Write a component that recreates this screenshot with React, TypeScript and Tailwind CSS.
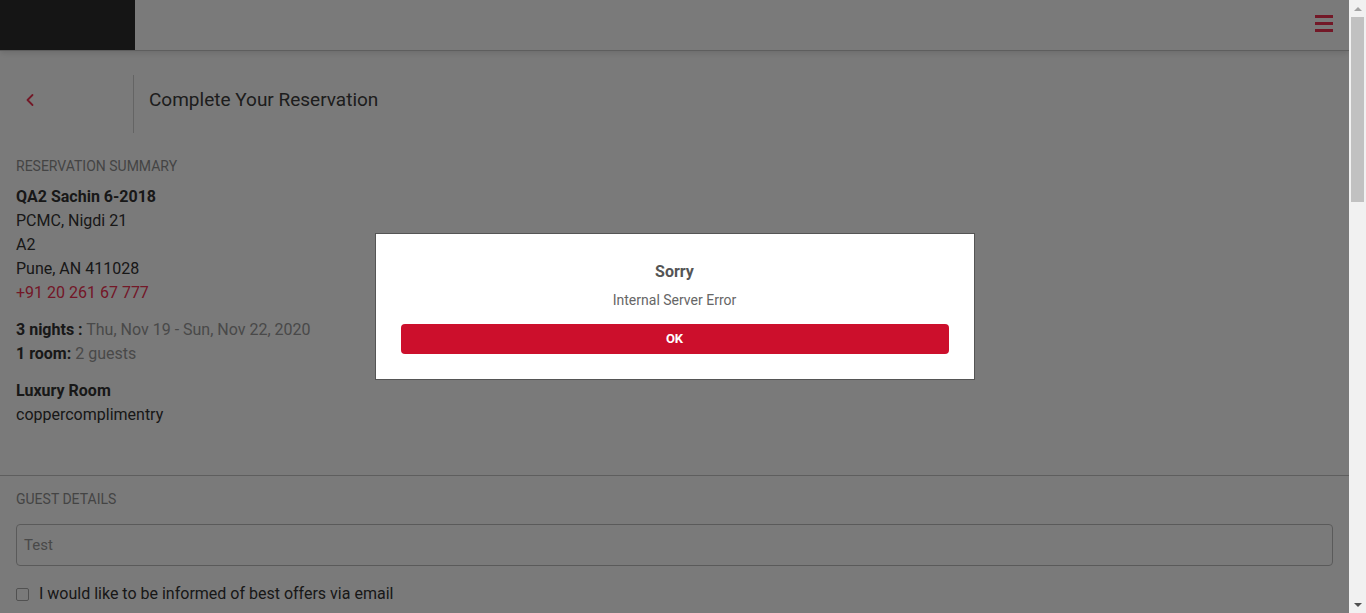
import { ChevronLeft } from "lucide-react";

const font = { fontFamily: "Roboto, 'Liberation Sans', sans-serif" };

const Header = () => (
  <div className="relative h-[51px] bg-white border-b border-[#c4c4c4] shadow-[0_2px_6px_rgba(0,0,0,0.12)]">
    <div className="flex flex-row justify-between items-center h-[50px]">
      <div className="w-[135px] h-full bg-[#2d2d2d]" />
      <div className="flex flex-col gap-[4px] mr-[16px] mt-[-4px]">
        <span className="block w-[18px] h-[3px] bg-[#f03252]" />
        <span className="block w-[18px] h-[3px] bg-[#f03252]" />
        <span className="block w-[18px] h-[3px] bg-[#f03252]" />
      </div>
    </div>
  </div>
);

const SummaryLine = ({ children, className = "" }: { children: React.ReactNode; className?: string }) => (
  <p className={`text-[16px] leading-[24px] text-[#333] ${className}`}>{children}</p>
);

const Field = ({ placeholder }: { placeholder: string }) => (
  <div className="w-full h-[42px] border border-[#bdbdbd] rounded-[4px] flex items-center px-[7px] text-[15px] text-[#999]">
    {placeholder}
  </div>
);

const Scrollbar = () => (
  <div className="w-[17px] h-full bg-[#f1f1f1] flex flex-col items-center shrink-0">
    <div className="h-[17px] w-full flex items-center justify-center">
      <span className="block w-0 h-0 border-l-[4px] border-r-[4px] border-b-[4px] border-l-transparent border-r-transparent border-b-[#a3a3a3]" />
    </div>
    <div className="w-[13px] h-[185px] bg-[#c1c1c1]" />
    <div className="flex-1" />
    <div className="h-[17px] w-full flex items-center justify-center">
      <span className="block w-0 h-0 border-l-[4px] border-r-[4px] border-t-[4px] border-l-transparent border-r-transparent border-t-[#505050]" />
    </div>
  </div>
);

export default function App() {
  return (
    <div className="flex flex-row h-screen overflow-hidden bg-white" style={font}>
      <div className="relative flex-1 h-full overflow-hidden">
        <Header />
        <div className="flex flex-row items-center mt-[24px] h-[58px]">
          <div className="w-[134px] h-full border-r border-[#d2d2d2] flex items-center pl-[20px] pb-[9px]">
            <ChevronLeft size={20} strokeWidth={2.2} color="#f03252" />
          </div>
          <h1 className="pl-[15px] pb-[8px] text-[19px] text-[#3d3d3d]">Complete Your Reservation</h1>
        </div>

        <div className="px-[16px] pt-[25px]">
          <p className="text-[14px] leading-[16px] text-[#8f8f8f] uppercase">Reservation Summary</p>
          <div className="mt-[11px]">
            <SummaryLine className="font-bold">QA2 Sachin 6-2018</SummaryLine>
            <SummaryLine>PCMC, Nigdi 21</SummaryLine>
            <SummaryLine>A2</SummaryLine>
            <SummaryLine>Pune, AN 411028</SummaryLine>
            <SummaryLine className="!text-[#f03252]">+91 20 261 67 777</SummaryLine>
          </div>
          <div className="mt-[13px]">
            <SummaryLine>
              <span className="font-bold">3 nights :</span>{" "}
              <span className="text-[#999]">Thu, Nov 19 - Sun, Nov 22, 2020</span>
            </SummaryLine>
            <SummaryLine>
              <span className="font-bold">1 room:</span> <span className="text-[#999]">2 guests</span>
            </SummaryLine>
          </div>
          <div className="mt-[13px]">
            <SummaryLine className="font-bold">Luxury Room</SummaryLine>
            <SummaryLine>coppercomplimentry</SummaryLine>
          </div>
        </div>

        <div className="mt-[48px] border-t border-[#c4c4c4]" />

        <div className="px-[16px] pt-[15px]">
          <p className="text-[14px] leading-[16px] text-[#8f8f8f] uppercase">Guest Details</p>
          <div className="mt-[17px]">
            <Field placeholder="Test" />
          </div>
          <label className="flex flex-row items-center gap-[10px] mt-[16px]">
            <span className="block w-[13px] h-[13px] border border-[#aaa] rounded-[2px] bg-white" />
            <span className="text-[16px] leading-[24px] text-[#333]">I would like to be informed of best offers via email</span>
          </label>
        </div>

        {/* backdrop */}
        <div className="absolute inset-0 bg-black/[0.52] z-40" />

        {/* dialog */}
        <div className="absolute inset-0 z-50 flex items-center justify-center">
          <div className="w-[600px] bg-white border border-[#555] px-[25px] pt-[28px] pb-[25px] flex flex-col items-center">
            <p className="text-[16px] leading-[20px] font-bold text-[#555]">Sorry</p>
            <p className="mt-[9px] text-[14px] leading-[18px] text-[#666]">Internal Server Error</p>
            <button className="mt-[15px] w-full h-[30px] rounded-[4px] bg-[#cc0f2c] text-white text-[13px] font-bold">
              OK
            </button>
          </div>
        </div>
      </div>
      <Scrollbar />
    </div>
  );
}
